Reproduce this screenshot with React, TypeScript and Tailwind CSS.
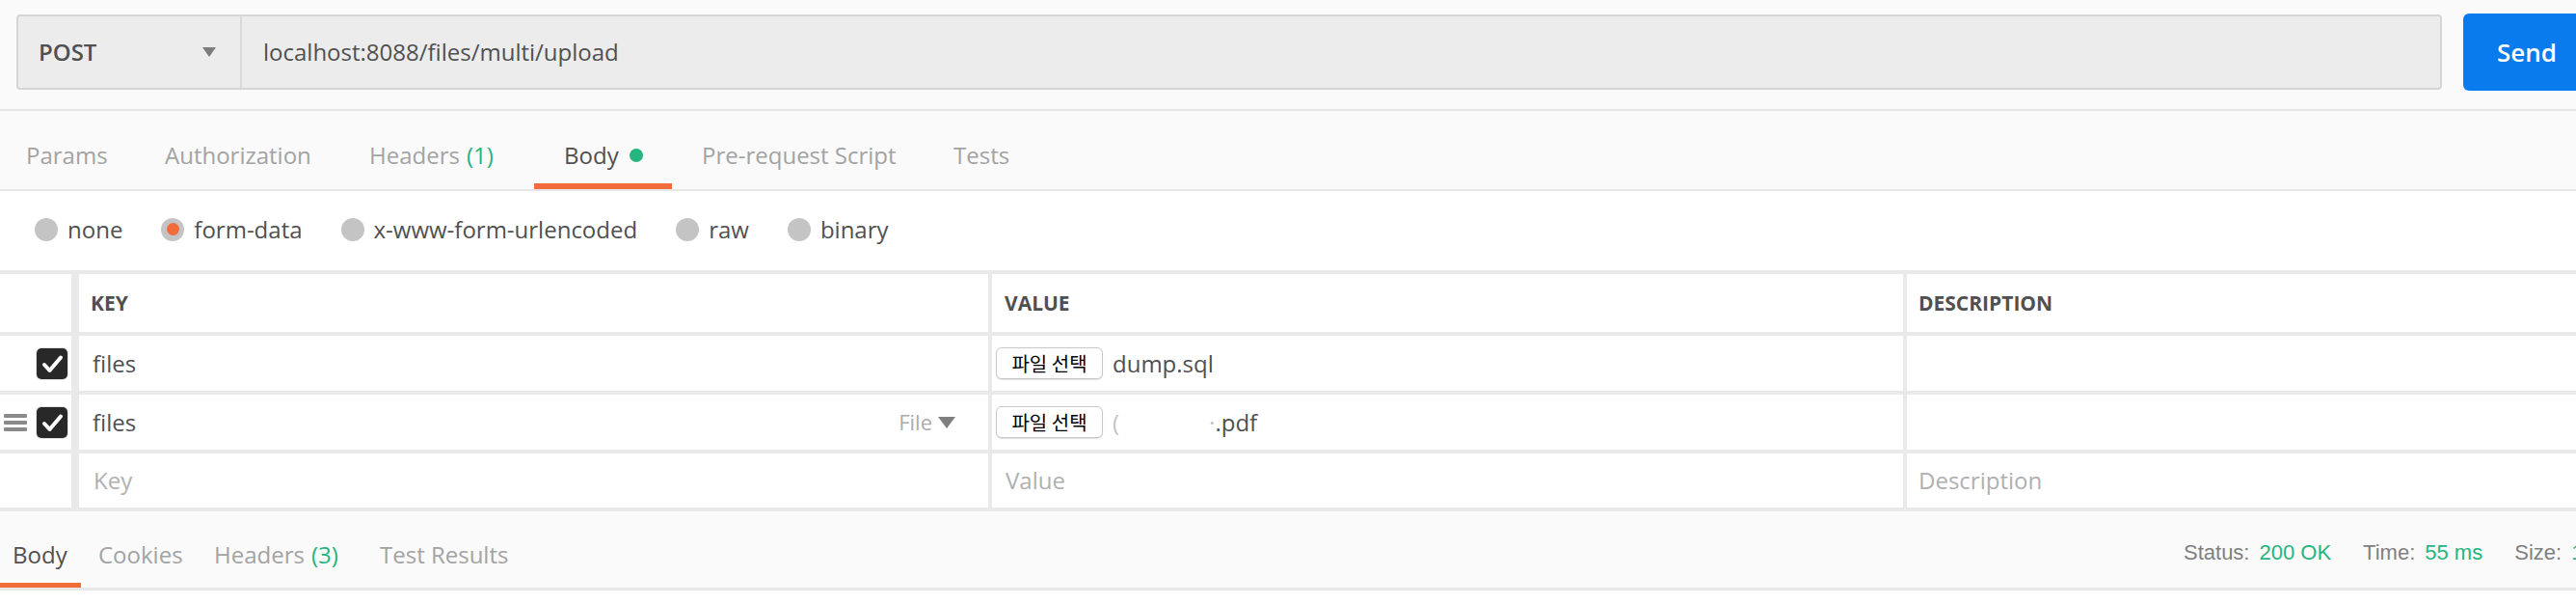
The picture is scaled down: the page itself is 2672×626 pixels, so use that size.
import React from 'react';

const tabs = [
  { label: 'Params', w: 'w-[141px]', pl: 'pl-[27px]' },
  { label: 'Authorization', w: 'w-[211px]', pl: 'pl-[30px]' },
  { label: 'Headers', count: '(1)', w: 'w-[202px]', pl: 'pl-[31px]' },
  { label: 'Body', dot: true, active: true, w: 'w-[143px]', pl: 'pl-[31px]' },
  { label: 'Pre-request Script', w: 'w-[261px]', pl: 'pl-[31px]' },
  { label: 'Tests', w: 'w-[200px]', pl: 'pl-[31px]' },
];

const bodyTypes = ['none', 'form-data', 'x-www-form-urlencoded', 'raw', 'binary'];

function Checkbox() {
  return (
    <div className="w-[32px] h-[32px] rounded-[5px] bg-[#282828] ring-1 ring-[#e2e2e2] flex items-center justify-center">
      <svg width="32" height="32" viewBox="0 0 32 32">
        <path d="M8 17 L13.5 23 L25 9.5" fill="none" stroke="#fff" strokeWidth="4" strokeLinecap="round" strokeLinejoin="round" />
      </svg>
    </div>
  );
}

function FileButton() {
  return (
    <div className="w-[111px] h-[33px] flex-none rounded-[6px] border border-[#c8c8c8] bg-white shadow-[0_1px_1px_rgba(0,0,0,0.12)] flex items-center justify-center text-[20px] text-black font-['Noto_Sans_CJK_KR',sans-serif]">
      파일 선택
    </div>
  );
}

export default function App() {
  return (
    <div className="w-[2672px] h-[626px] overflow-hidden bg-[#fafafa] font-['Open_Sans',sans-serif] text-[#505050]">
      {/* url bar */}
      <div className="h-[113px] flex items-center pl-[17px] pb-[5px]">
        <div className="w-[2516px] h-[78px] flex-none flex rounded-[4px] border-2 border-[#d5d5d5] bg-[#ececec]">
          <div className="w-[232px] flex-none flex items-center justify-between pl-[21px] pr-[25px] border-r-2 border-[#d9d9d9]">
            <span className="text-[24px] font-semibold">POST</span>
            <svg width="14" height="10" viewBox="0 0 14 10">
              <path d="M0 0 H14 L7 10 Z" fill="#7d7d7d" />
            </svg>
          </div>
          <div className="flex items-center pl-[22px] text-[24px]">localhost:8088/files/multi/upload</div>
        </div>
        <button className="ml-[22px] w-[200px] h-[80px] flex-none rounded-[6px] bg-[#097bed] text-white text-[26px] font-semibold flex items-center pl-[35px]">
          Send
        </button>
      </div>

      {/* request tabs */}
      <div className="h-[85px] flex border-y-2 border-[#e6e6e6]">
        {tabs.map((t) => (
          <div
            key={t.label}
            className={`${t.w} ${t.pl} flex-none h-full flex items-center pt-[17px] border-b-[6px] text-[24px] ${
              t.active ? 'border-[#f26b3a] text-[#505050]' : 'border-transparent text-[#a3a3a3]'
            }`}
          >
            <span>{t.label}</span>
            {t.count && <span className="ml-[7px] text-[#26b47f]">{t.count}</span>}
            {t.dot && <span className="ml-[11px] w-[14px] h-[14px] rounded-full bg-[#26b47f]" />}
          </div>
        ))}
      </div>

      {/* body type */}
      <div className="h-[82px] bg-white flex items-center pl-[36px] pb-[3px] gap-x-[40px] text-[24px]">
        {bodyTypes.map((b) => (
          <div key={b} className="flex items-center gap-x-[10px]">
            <div className="w-[24px] h-[24px] rounded-full bg-[#c4c4c4] flex items-center justify-center">
              {b === 'form-data' && <div className="w-[13px] h-[13px] rounded-full bg-[#f26b3a]" />}
            </div>
            <span>{b}</span>
          </div>
        ))}
      </div>

      {/* params table */}
      <div className="bg-[#e9e9e9] py-[4px] grid grid-cols-[78px_943px_945px_1fr] grid-rows-[60px_57px_57px_56px] gap-[4px] text-[24px]">
        <div className="bg-white mr-[4px]" />
        <div className="bg-white flex items-center pl-[12px] pt-[2px] text-[21px] font-bold">KEY</div>
        <div className="bg-white flex items-center pl-[13px] pt-[2px] text-[21px] font-bold">VALUE</div>
        <div className="bg-white flex items-center pl-[12px] pt-[2px] text-[21px] font-bold">DESCRIPTION</div>

        <div className="bg-white mr-[4px] flex items-center pl-[38px]">
          <Checkbox />
        </div>
        <div className="bg-white flex items-center px-[14px]">files</div>
        <div className="bg-white flex items-center pl-[4px]">
          <FileButton />
          <span className="ml-[10px]">dump.sql</span>
        </div>
        <div className="bg-white" />

        <div className="bg-white mr-[4px] flex items-center pl-[4px] gap-x-[10px]">
          <div className="w-[24px] flex flex-col gap-y-[3px]">
            <div className="h-[4px] rounded-[1px] bg-[#8a8a8a]" />
            <div className="h-[4px] rounded-[1px] bg-[#8a8a8a]" />
            <div className="h-[4px] rounded-[1px] bg-[#8a8a8a]" />
          </div>
          <Checkbox />
        </div>
        <div className="bg-white flex items-center justify-between pl-[14px] pr-[34px]">
          <span>files</span>
          <span className="flex items-center gap-x-[6px] text-[22px] text-[#ababab]">
            File
            <svg width="18" height="12" viewBox="0 0 18 12">
              <path d="M0 0 H18 L9 12 Z" fill="#7f7f7f" />
            </svg>
          </span>
        </div>
        <div className="bg-white flex items-center pl-[4px]">
          <FileButton />
          <span className="ml-[10px] text-[#c4c4c4]">(</span>
          <span className="ml-[93px]">
            <span className="text-[#c4c4c4]">·</span>.pdf
          </span>
        </div>
        <div className="bg-white" />

        <div className="bg-white mr-[4px]" />
        <div className="bg-white flex items-center px-[15px] text-[#b0b0b0]">Key</div>
        <div className="bg-white flex items-center px-[14px] text-[#b0b0b0]">Value</div>
        <div className="bg-white flex items-center px-[12px] text-[#b0b0b0]">Description</div>
      </div>

      {/* response tabs */}
      <div className="h-[82px] flex border-b-[3px] border-[#e8e8e8] text-[24px]">
        <div className="w-[2265px] flex-none flex">
          <div className="w-[84px] flex-none h-full flex items-center pl-[13px] pt-[15px] border-b-[5px] border-[#f26b3a] text-[#505050]">
            Body
          </div>
          <div className="w-[120px] flex-none h-full flex items-center pl-[18px] pt-[15px] border-b-[5px] border-transparent text-[#a3a3a3]">
            Cookies
          </div>
          <div className="w-[172px] flex-none h-full flex items-center pl-[18px] pt-[15px] border-b-[5px] border-transparent text-[#a3a3a3]">
            Headers<span className="ml-[7px] text-[#26b47f]">(3)</span>
          </div>
          <div className="w-[200px] flex-none h-full flex items-center pl-[18px] pt-[15px] border-b-[5px] border-transparent text-[#a3a3a3]">
            Test Results
          </div>
        </div>
        <div className="flex-none h-[79px] flex items-center pt-[6px] whitespace-nowrap font-['Liberation_Sans',Arial,sans-serif] text-[22px]">
          <span className="text-[#808080]">Status:</span>
          <span className="ml-[10px] text-[#26b47f]">200 OK</span>
          <span className="ml-[33px] text-[#808080]">Time:</span>
          <span className="ml-[10px] text-[#26b47f]">55 ms</span>
          <span className="ml-[33px] text-[#808080]">Size:</span>
          <span className="ml-[10px] text-[#26b47f]">189 B</span>
        </div>
      </div>
      <div className="h-[14px] bg-white" />
    </div>
  );
}
